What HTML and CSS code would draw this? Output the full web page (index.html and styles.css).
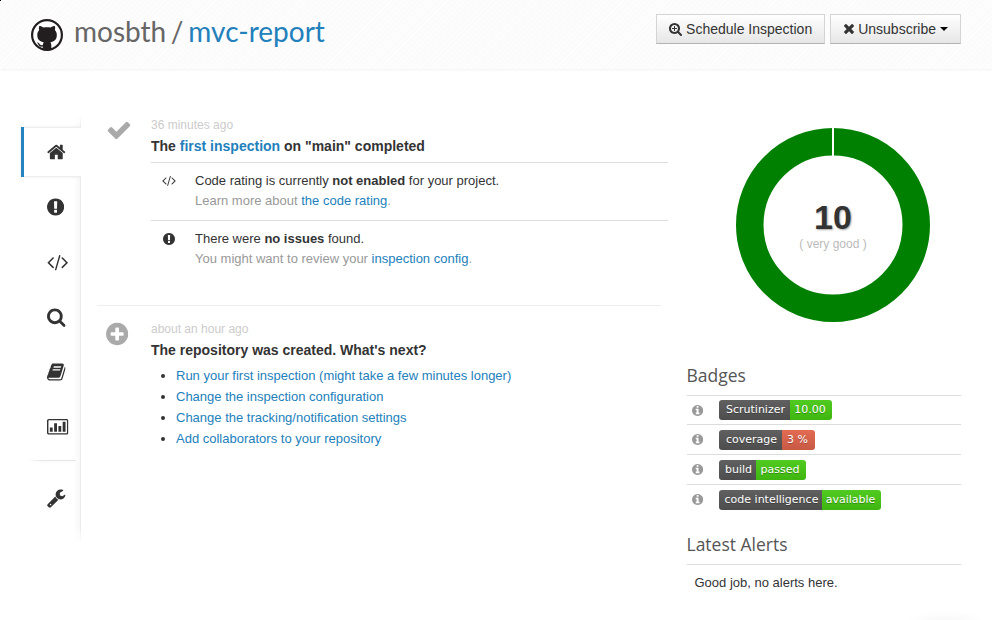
FILE: index.html
```html
<!DOCTYPE html>
<html lang="en">
<head>
<meta charset="utf-8">
<title>mosbth / mvc-report</title>
<link rel="stylesheet" href="styles.css">
</head>
<body>
<svg class="sprite" aria-hidden="true">
  <symbol id="home" viewBox="64 0 1664 1792"><path d="M1472 992v480q0 26-19 45t-45 19h-384v-384h-256v384h-384q-26 0-45-19t-19-45v-480q0-1 .5-3t.5-3l575-474 575 474q1 2 1 6zm223-69l-62 74q-8 9-21 11h-3q-13 0-21-7l-692-577-692 577q-12 8-24 7-13-2-21-11l-62-74q-8-10-7-23.5t11-21.5l719-599q32-26 76-26t76 26l244 204v-195q0-14 9-23t23-9h192q14 0 23 9t9 23v408l219 182q10 8 11 21.5t-7 23.5z"/></symbol>
  <symbol id="alert" viewBox="128 0 1536 1792"><path d="M896 128q209 0 385.500 103t279.500 279.500 103 385.500-103 385.500-279.500 279.500-385.500 103-385.500-103-279.500-279.500-103-385.500 103-385.500 279.500-279.500 385.500-103zm128 1247v-190q0-14-9-23.500t-22-9.500h-192q-13 0-23 10t-10 23v190q0 13 10 23t23 10h192q13 0 22-9.500t9-23.500zm-2-344l18-621q0-12-10-18-10-8-24-8h-220q-14 0-24 8-10 6-10 18l17 621q0 10 10 17.500t24 7.500h185q14 0 23.500-7.500t10.500-17.500z"/></symbol>
  <symbol id="code" viewBox="0 0 1920 1792"><path d="M617 1399l-50 50q-10 10-23 10t-23-10l-466-466q-10-10-10-23t10-23l466-466q10-10 23-10t23 10l50 50q10 10 10 23t-10 23l-393 393 393 393q10 10 10 23t-10 23zm591-1067l-373 1291q-4 13-15.500 19.500t-23.500 2.500l-62-17q-13-4-19.500-15.500t-2.500-24.500l373-1291q4-13 15.500-19.500t23.500-2.500l62 17q13 4 19.500 15.500t2.500 24.500zm657 651l-466 466q-10 10-23 10t-23-10l-50-50q-10-10-10-23t10-23l393-393-393-393q-10-10-10-23t10-23l50-50q10-10 23-10t23 10l466 466q10 10 10 23t-10 23z"/></symbol>
  <symbol id="search" viewBox="64 0 1664 1792"><path d="M1216 832q0-185-131.500-316.500t-316.500-131.500-316.500 131.500-131.500 316.500 131.500 316.500 316.500 131.500 316.500-131.500 131.500-316.500zm512 832q0 52-38 90t-90 38q-54 0-90-38l-343-342q-179 124-399 124-143 0-273.500-55.500t-225-150-150-225-55.500-273.500 55.500-273.500 150-225 225-150 273.500-55.500 273.500 55.500 225 150 150 225 55.500 273.500q0 220-124 399l343 343q37 37 37 90z"/></symbol>
  <symbol id="zoom-in" viewBox="64 0 1664 1792"><path d="M1088 800v64q0 13-9.500 22.500t-22.500 9.500h-224v224q0 13-9.500 22.500t-22.500 9.500h-64q-13 0-22.500-9.500t-9.500-22.500v-224h-224q-13 0-22.500-9.500t-9.500-22.500v-64q0-13 9.500-22.500t22.500-9.500h224v-224q0-13 9.500-22.500t22.500-9.500h64q13 0 22.500 9.500t9.500 22.500v224h224q13 0 22.500 9.500t9.500 22.500zm128 32q0-185-131.500-316.500t-316.500-131.500-316.500 131.500-131.500 316.500 131.500 316.500 316.500 131.500 316.500-131.500 131.500-316.500zm512 832q0 52-38 90t-90 38q-54 0-90-38l-343-342q-179 124-399 124-143 0-273.500-55.500t-225-150-150-225-55.500-273.500 55.500-273.500 150-225 225-150 273.500-55.500 273.500 55.500 225 150 150 225 55.500 273.500q0 220-124 399l343 343q37 37 37 90z"/></symbol>
  <symbol id="book" viewBox="64 0 1664 1792"><path d="M1703 478q40 57 18 129l-275 906q-19 64-76.500 107.500t-122.500 43.500h-923q-77 0-148.500-53.500t-99.500-131.500q-24-67-2-127 0-4 3-27t4-37q1-8-3-21.500t-3-19.500q2-11 8-21t16.500-23.500 16.500-23.500q23-38 45-91.500t30-91.500q3-10 .5-30t-.5-28q3-11 17-28t17-23q21-36 42-92t25-90q1-9-2.500-32t.5-28q4-13 22-30.500t22-22.500q19-26 42.500-84.500t27.500-96.500q1-8-3-25.500t-2-26.500q2-8 9-18t18-23 17-21q8-12 16.500-30.500t15-35 16-36 19.500-32 26.500-23.500 36-11.500 47.500 5.500l-1 3q38-9 51-9h761q74 0 114 56t18 130l-274 906q-36 119-71.500 153.500t-128.500 34.500h-869q-27 0-38 15-11 16-1 43 24 70 144 70h923q29 0 56-15.500t35-41.500l300-987q7-22 5-57 38 15 59 43zm-1064 2q-4 13 2 22.500t20 9.500h608q13 0 25.500-9.500t16.500-22.500l21-64q4-13-2-22.500t-20-9.500h-608q-13 0-25.500 9.500t-16.500 22.500zm-83 256q-4 13 2 22.500t20 9.500h608q13 0 25.500-9.500t16.500-22.500l21-64q4-13-2-22.500t-20-9.500h-608q-13 0-25.500 9.500t-16.500 22.500z"/></symbol>
  <symbol id="chart" viewBox="0 -40 1920 1792"><path fill-rule="evenodd" d="M160 128H1760q66 0 113 47t47 113V1376q0 66-47 113t-113 47H160q-66 0-113-47T0 1376V288q0-66 47-113t113-47zm0 128q-32 0-32 32V1376q0 32 32 32H1760q32 0 32-32V288q0-32-32-32zM256 896H512V1280H256zM640 512H896V1280H640zM1024 768H1280V1280H1024zM1408 384H1664V1280H1408z"/></symbol>
  <symbol id="wrench" viewBox="64 0 1664 1792"><path d="M448 1472q0-26-19-45t-45-19-45 19-19 45 19 45 45 19 45-19 19-45zm644-420l-682 682q-37 37-90 37-52 0-91-37l-106-108q-38-36-38-90 0-53 38-91l681-681q39 98 114.500 173.500t173.500 114.500zm634-435q0 39-23 106-47 134-164.500 217.500t-258.500 83.500q-185 0-316.500-131.500t-131.500-316.500 131.500-316.500 316.500-131.500q58 0 121.500 16.500t107.500 46.500q16 11 16 28t-16 28l-293 169v224l193 107q5-3 79-48.500t135.500-81 70.500-35.500q15 0 23.500 10t8.500 25z"/></symbol>
  <symbol id="check" viewBox="0 0 1792 1792"><path d="M1671 566q0 40-28 68l-724 724-136 136q-28 28-68 28t-68-28l-136-136-362-362q-28-28-28-68t28-68l136-136q28-28 68-28t68 28l294 295 656-657q28-28 68-28t68 28l136 136q28 28 28 68z"/></symbol>
  <symbol id="plus" viewBox="128 0 1536 1792"><path d="M1344 960v-128q0-26-19-45t-45-19h-256v-256q0-26-19-45t-45-19h-128q-26 0-45 19t-19 45v256h-256q-26 0-45 19t-19 45v128q0 26 19 45t45 19h256v256q0 26 19 45t45 19h128q26 0 45-19t19-45v-256h256q26 0 45-19t19-45zm320-64q0 209-103 385.500t-279.500 279.500-385.500 103-385.500-103-279.500-279.500-103-385.500 103-385.500 279.500-279.500 385.500-103 385.500 103 279.500 279.500 103 385.500z"/></symbol>
  <symbol id="info" viewBox="128 0 1536 1792"><path d="M1152 1376v-160q0-14-9-23t-23-9h-96v-512q0-14-9-23t-23-9h-320q-14 0-23 9t-9 23v160q0 14 9 23t23 9h96v320h-96q-14 0-23 9t-9 23v160q0 14 9 23t23 9h448q14 0 23-9t9-23zm-128-896v-160q0-14-9-23t-23-9h-192q-14 0-23 9t-9 23v160q0 14 9 23t23 9h192q14 0 23-9t9-23zm640 416q0 209-103 385.500t-279.500 279.500-385.500 103-385.500-103-279.500-279.500-103-385.500 103-385.500 279.500-279.500 385.500-103 385.500 103 279.500 279.500 103 385.500z"/></symbol>
  <symbol id="times" viewBox="302 132 1188 1792"><path d="M1490 1322q0 40-28 68l-136 136q-28 28-68 28t-68-28l-294-294-294 294q-28 28-68 28t-68-28l-136-136q-28-28-28-68t28-68l294-294-294-294q-28-28-28-68t28-68l136-136q28-28 68-28t68 28l294 294 294-294q28-28 68-28t68 28l136 136q28 28 28 68t-28 68l-294 294 294 294q28 28 28 68z"/></symbol>
</svg>

<header class="header">
  <h1 class="repo">
    <svg class="github" viewBox="0 0 32 32"><circle cx="16" cy="16" r="14.900" fill="#fff" stroke="#221e1f" stroke-width="2.200"/><path fill="#221e1f" d="M8.300 7.100c1.500 0 3 .7 4.200 1.500 2.200-.5 4.800-.5 7 0 1.200-.8 2.700-1.500 4.200-1.500.6 1.200.6 2.600.2 3.900 1.400 1.600 2.100 3.400 1.900 5.700-.3 4.200-2.700 5.900-6.400 6.500.7.900.9 1.900.9 3.300v4.200c-2.700.8-5.900.8-8.600 0v-3.200c-3.300.6-3.800-1-4.500-2.300-.5-.9-1-1.100-1.500-1.600 1.600-.4 2.500.7 3.200 1.700.7 1 1.600 1.200 2.900.8.1-1.100.4-2.100 1-2.900-3.700-.6-6.200-2.300-6.500-6.500-.2-2.300.5-4.100 1.900-5.700-.4-1.300-.4-2.700.1-3.900z"/></svg>
    <span class="owner">mosbth</span><span class="slash">/</span><a class="link">mvc-report</a>
  </h1>
  <div class="actions">
    <button class="button"><svg class="icon icon-schedule"><use href="#zoom-in"/></svg>Schedule Inspection</button>
    <button class="button"><svg class="icon icon-times"><use href="#times"/></svg>Unsubscribe<i class="caret"></i></button>
  </div>
</header>

<main class="page">
  <nav class="sidebar">
    <a class="tab active"><svg class="icon nav-icon"><use href="#home"/></svg></a>
    <a class="tab"><svg class="icon nav-icon round"><use href="#alert"/></svg></a>
    <a class="tab"><svg class="icon nav-icon wide"><use href="#code"/></svg></a>
    <a class="tab"><svg class="icon nav-icon"><use href="#search"/></svg></a>
    <a class="tab"><svg class="icon nav-icon"><use href="#book"/></svg></a>
    <a class="tab"><svg class="icon nav-icon wide"><use href="#chart"/></svg></a>
    <div class="divider"></div>
    <a class="tab"><svg class="icon nav-icon"><use href="#wrench"/></svg></a>
  </nav>

  <section class="timeline">
    <article class="event">
      <div class="event-mark"><svg class="icon mark-check"><use href="#check"/></svg></div>
      <div class="event-body">
        <div class="time">36 minutes ago</div>
        <h2 class="event-title">The <a class="link">first inspection</a> on "main" completed</h2>
        <div class="note">
          <svg class="icon note-icon wide"><use href="#code"/></svg>
          <div><p>Code rating is currently <b>not enabled</b> for your project.</p><p class="muted">Learn more about <a class="link">the code rating</a>.</p></div>
        </div>
        <div class="note">
          <svg class="icon note-icon"><use href="#alert"/></svg>
          <div><p>There were <b>no issues</b> found.</p><p class="muted">You might want to review your <a class="link">inspection config</a>.</p></div>
        </div>
      </div>
    </article>
    <hr class="rule">
    <article class="event">
      <div class="event-mark"><svg class="icon mark-plus"><use href="#plus"/></svg></div>
      <div class="event-body">
        <div class="time">about an hour ago</div>
        <h2 class="event-title">The repository was created. What's next?</h2>
        <ul class="steps">
          <li><a class="link">Run your first inspection (might take a few minutes longer)</a></li>
          <li><a class="link">Change the inspection configuration</a></li>
          <li><a class="link">Change the tracking/notification settings</a></li>
          <li><a class="link">Add collaborators to your repository</a></li>
        </ul>
      </div>
    </article>
  </section>

  <aside class="summary">
    <div class="rating">
      <svg class="ring" viewBox="0 0 194 194"><circle cx="97" cy="97" r="83.250" fill="none" stroke="#008000" stroke-width="27.500"/><path d="M97 0V28" stroke="#fff" stroke-width="2"/></svg>
      <div class="score"><strong>10</strong><span>( very good )</span></div>
    </div>
    <h3 class="heading">Badges</h3>
    <div class="badges">
      <div class="badge-row"><svg class="icon info"><use href="#info"/></svg><span class="badge"><span class="key k1">Scrutinizer</span><span class="value v1">10.00</span></span></div>
      <div class="badge-row"><svg class="icon info"><use href="#info"/></svg><span class="badge"><span class="key k2">coverage</span><span class="value v2 red">3 %</span></span></div>
      <div class="badge-row"><svg class="icon info"><use href="#info"/></svg><span class="badge"><span class="key k3">build</span><span class="value v3">passed</span></span></div>
      <div class="badge-row"><svg class="icon info"><use href="#info"/></svg><span class="badge"><span class="key k4">code intelligence</span><span class="value v4">available</span></span></div>
    </div>
    <h3 class="heading alerts-heading">Latest Alerts</h3>
    <p class="alerts">Good job, no alerts here.</p>
  </aside>
</main>
</body>
</html>
```
FILE: styles.css
```css
* { box-sizing: border-box; }
body {
  margin: 0;
  height: 620px;
  overflow: hidden;
  background: radial-gradient(ellipse 42px 14px at 945px 624px, #f6f6f6, #fff) #fff;
  color: #333;
  font: 13px/20px "Liberation Sans", Arial, sans-serif;
}
h1, h2, h3, p, ul { margin: 0; padding: 0; }
.sprite { display: none; }
.icon { display: block; flex: none; fill: currentColor; overflow: visible; }
.link { color: #2280bb; }

.header {
  display: flex;
  justify-content: space-between;
  align-items: flex-start;
  height: 69px;
  padding: 14px 31px 0;
  background:
    linear-gradient(#000, #000) 0 0 / 1px 1px no-repeat,
    repeating-linear-gradient(135deg, #fdfdfd 0 2px, #fbfbfb 2px 4px);
  box-shadow: 0 0 3px rgba(0, 0, 0, .1);
}
.repo {
  display: flex;
  align-items: center;
  height: 34px;
  color: #666;
  font: 28px/36px Lato, sans-serif;
}
.github { width: 32px; height: 32px; margin: 8px 11px 0 0; }
.slash { margin: 0 5px 0 4.500px; }
.actions { display: flex; gap: 5px; }
.button {
  display: flex;
  align-items: center;
  height: 30px;
  padding: 0 12px;
  border: 1px solid #d4d4d4;
  border-bottom-color: #b3b3b3;
  background: linear-gradient(#fff, #e6e6e6);
  color: #333;
  font: 14px/20px "Liberation Sans", Arial, sans-serif;
  white-space: nowrap;
}
.icon-schedule { width: 13px; height: 14px; margin-right: 4px; }
.icon-times { width: 10px; height: 15px; margin: 0 4px 0 1px; }
.caret {
  margin-left: 4px;
  border: 4px solid transparent;
  border-top-color: #000;
  border-bottom: 0;
}

.page {
  display: grid;
  grid-template-columns: 76px 589.500px 274.500px;
  padding: 46px 0 0 21px;
  align-items: start;
}

.sidebar {
  display: flex;
  flex-direction: column;
  width: 60px;
  height: 428px;
  padding-top: 12px;
  background:
    linear-gradient(#fff, transparent 14px calc(100% - 16px), #fff),
    linear-gradient(#ebebeb, #ebebeb) 59px 0 / 1px 100% no-repeat,
    linear-gradient(90deg, #fff, #f7f7f7) 53px 0 / 6px 100% no-repeat;
}
.tab { display: flex; align-items: center; height: 50px; margin-bottom: 5px; padding-left: 26px; }
.active {
  padding-left: 23px;
  border-left: 3px solid #2583bf;
  background: linear-gradient(#eee 1px, #fff 1px calc(100% - 1px), #eee calc(100% - 1px));
  box-shadow: 0 0 3px rgba(0, 0, 0, .08);
  clip-path: inset(-3px 0 -3px -3px);
}
.nav-icon { width: 18.600px; height: 20px; }
.nav-icon.round { width: 17.200px; }
.nav-icon.wide { width: 21.400px; }
.divider {
  width: 48px;
  height: 4px;
  margin: 3px 0 9px 7px;
  background: linear-gradient(90deg, #fff, transparent 30%), linear-gradient(#e6e6e6 1px, #fafafa 1px, #fff);
}

.event { display: flex; }
.event-mark { width: 54px; padding-left: 9px; color: #aaa; }
.mark-check { width: 26px; height: 26px; margin-top: 2px; }
.mark-plus { width: 22.300px; height: 26px; margin-top: 2px; }
.event-body { width: 517px; }
.time { color: #ccc; font-size: 12px; height: 21px; }
.event-title { height: 26px; font-size: 14px; line-height: 20px; }
.note { display: flex; height: 58px; padding-top: 8px; border-top: 1px solid #ddd; }
.note-icon { width: 12px; height: 14px; margin: 2.500px 20px 0 12px; }
.note-icon.wide { width: 14px; height: 13px; margin: 3px 19px 0 11px; }
.muted { color: #999; }
.rule { width: 564px; margin: 27px 0 13px; border: 0; border-top: 1px solid #eee; }
.steps { margin: -1px 0 0 25px; line-height: 21px; }

.rating { display: grid; width: 194px; height: 194px; margin: 13px 0 0 49.500px; }
.ring, .score { grid-area: 1 / 1; }
.ring { width: 194px; height: 194px; }
.score { display: flex; flex-direction: column; align-items: center; padding-top: 69px; }
.score strong { font-size: 34px; line-height: 40px; text-shadow: 1px 1px 2px #aaa; }
.score span { color: #bbb; font-size: 12px; line-height: 14px; }
.heading {
  height: 36px;
  margin-top: 37px;
  color: #555;
  font: 17.500px/32px "Open Sans", sans-serif;
}
.badge-row { display: flex; height: 30px; padding: 5px 0 0 4px; border-top: 1px solid #ddd; }
.badge-row:first-child { height: 29px; padding-top: 4px; }
.info { width: 11.200px; height: 13px; margin: 2.500px 16.300px 0 1px; color: #999; }
.badge-row:first-child .info { margin-top: 3.500px; }
.badge {
  display: flex;
  height: 20px;
  border-radius: 3px;
  overflow: hidden;
  color: #fff;
  font: 11px/20px "DejaVu Sans", sans-serif;
  text-shadow: 0 1px rgba(1, 1, 1, .3);
  white-space: nowrap;
}
.key, .value { text-align: center; }
.key { padding-left: 2px; background: linear-gradient(#606060, #4d4d4d); }
.value { padding-right: 2px; background: linear-gradient(#50ca20, #3fb610); }
.red { background: linear-gradient(#e26b52, #c85944); }
.k1 { width: 71px; } .v1 { width: 42px; }
.k2 { width: 63px; } .v2 { width: 33px; }
.k3 { width: 37px; } .v3 { width: 50px; }
.k4 { width: 103px; } .v4 { width: 59px; }
.alerts-heading { margin-top: 14px; }
.alerts { padding: 8px; border-top: 1px solid #ddd; }
```
